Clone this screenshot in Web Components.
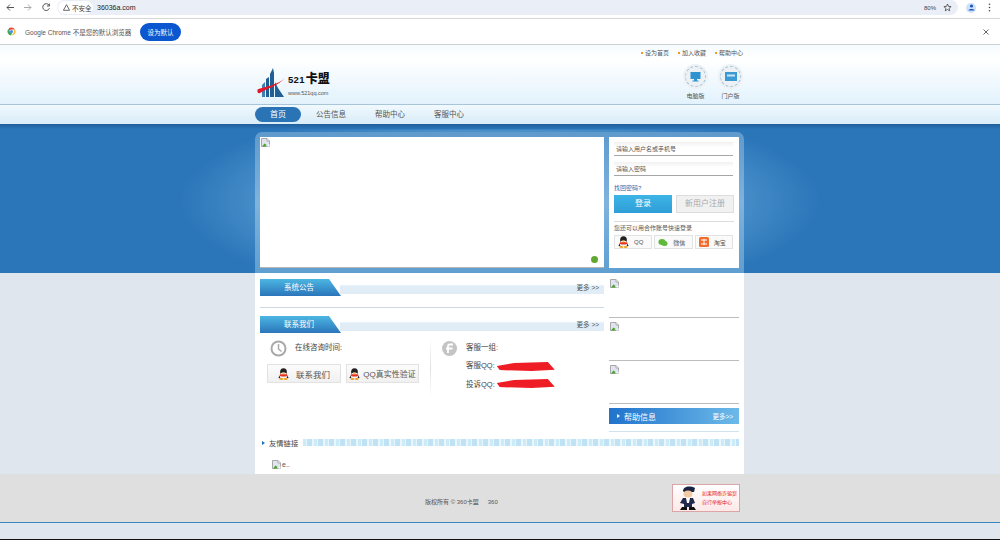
<!DOCTYPE html>
<html lang="zh">
<head>
<meta charset="utf-8">
<title>521卡盟</title>
<style>
    html, body { margin: 0; padding: 0; height: 540px; overflow: hidden; background: #dfe6ee; }
    body { box-sizing: border-box; border-bottom: 1px solid #111; font: 8px "Liberation Sans", "Noto Sans CJK SC", sans-serif; color: #444; display: flex; flex-direction: column; }
</style>
</head>
<body>
<browser-bar></browser-bar>
<info-bar></info-bar>
<site-header></site-header>
<site-nav></site-nav>
<hero-band></hero-band>
<main-panel></main-panel>
<site-footer></site-footer>

<script>
function html(strings, ...args) {
    let result = [strings[0]];
    for (let i = 0; i < args.length; i++) {
        result.push(args[i]);
        result.push(strings[i + 1]);
    }
    return result.join('');
}

function define(name, markup) {
    const template = document.createElement('template');
    template.innerHTML = markup;
    customElements.define(name, class extends HTMLElement {
        constructor() {
            super();
            this.attachShadow({mode: 'open'}).appendChild(template.content.cloneNode(true));
        }
    });
}

const penguin = html`<svg width="11" height="12" viewBox="0 0 11 12">
    <ellipse cx="5.5" cy="4" rx="3.4" ry="3.8" fill="#222"/>
    <ellipse cx="5.5" cy="7.6" rx="3.6" ry="3" fill="#f4f4f4"/>
    <path d="M2 6.2h7l.6 1.6-2 .6h-4l-2-.6z" fill="#e8341c"/>
    <path d="M1.6 7.5 .4 10l2 .2zM9.4 7.5l1.2 2.5-2 .2z" fill="#222"/>
    <ellipse cx="3.4" cy="11" rx="2" ry="1" fill="#f0a020"/>
    <ellipse cx="7.6" cy="11" rx="2" ry="1" fill="#f0a020"/>
    <ellipse cx="5.5" cy="5" rx="1.3" ry=".7" fill="#f0a020"/>
</svg>`;

define('broken-img', html`
    <style>:host { display: inline-block; width: 9px; height: 9px; line-height: 0; }</style>
    <svg width="9" height="9" viewBox="0 0 9 9">
        <path d="M.5.5h5.5l2.5 2.5v5.5h-8z" fill="#dfe4f0" stroke="#a8a8a8"/>
        <path d="M6 .5v2.5h2.5" fill="#fff" stroke="#a8a8a8"/>
        <path d="M1 8.5l2.500-3 2 1.500-1 1.500z" fill="#4aa52e"/>
        <path d="M6 8.500l2.500-2.500v2.500z" fill="#fff"/>
    </svg>
`);

define('browser-bar', html`
    <style>
        :host { display: flex; align-items: center; height: 18px; background: #fff; border-bottom: 1px solid #d6d6d6; padding-left: 5px; flex: none; }
        svg { display: block; flex: none; }
        .nav { display: flex; gap: 8px; margin-right: 6px; margin-top: -3px; }
        .omni { flex: none; width: 901px; height: 15px; margin-top: -3px; border-radius: 8px; background: #e9eef7; display: flex; align-items: center; box-sizing: border-box; padding: 0 1px; font-size: 7px; color: #222; }
        .chip { background: #fff; width: 35px; box-sizing: border-box; height: 13px; border-radius: 7px; display: flex; align-items: center; gap: 2px; padding-left: 5px; font-size: 6.500px; color: #444; margin-right: 4px; white-space: nowrap; }
        .url { flex: 1; }
        .end { display: flex; align-items: center; gap: 7px; margin-right: 5px; }
        .zoom { font-size: 6px; color: #444; }
        .acct { width: 10px; height: 10px; border-radius: 50%; background: #cfe0f8; margin-left: 8px; margin-top: -3px; display: flex; align-items: center; justify-content: center; }
        .dots { margin-left: 12px; margin-top: -3px; }
    </style>
    <div class="nav">
        <svg width="10" height="15" viewBox="0 0 10 15"><path d="M9 7.500H2M5 4.500l-3 3 3 3" fill="none" stroke="#555" stroke-width="1"/></svg>
        <svg width="10" height="15" viewBox="0 0 10 15"><path d="M1 7.500h7M5 4.500l3 3-3 3" fill="none" stroke="#aaa" stroke-width="1"/></svg>
        <svg width="10" height="15" viewBox="0 0 10 15"><path d="M8 5.200A3.400 3.400 0 1 0 8.400 8.200M8.400 3.600v2.400H6" fill="none" stroke="#555" stroke-width="1"/></svg>
    </div>
    <div class="omni">
        <span class="chip">
            <svg width="7" height="7" viewBox="0 0 7 7"><path d="M3.500.7 6.600 6.300H.4z" fill="none" stroke="#444" stroke-width=".8"/></svg>
            不安全
        </span>
        <span class="url">36036a.com</span>
        <span class="end">
            <span class="zoom">80%</span>
            <svg width="9" height="9" viewBox="0 0 9 9"><path d="M4.500 1l1 2.400 2.600.2-2 1.700.6 2.500-2.200-1.300-2.200 1.300.6-2.500-2-1.700 2.600-.2z" fill="none" stroke="#444" stroke-width=".8"/></svg>
        </span>
    </div>
    <span class="acct"><svg width="7" height="7" viewBox="0 0 7 7"><circle cx="3.500" cy="2" r="1.600" fill="#1a56b8"/><path d="M.5 6.500c0-2 6-2 6 0z" fill="#1a56b8"/></svg></span>
    <svg class="dots" width="3" height="9" viewBox="0 0 3 9"><circle cx="1.500" cy="1.200" r=".8" fill="#444"/><circle cx="1.500" cy="4.500" r=".8" fill="#444"/><circle cx="1.500" cy="7.800" r=".8" fill="#444"/></svg>
`);

define('info-bar', html`
    <style>
        :host { display: flex; align-items: center; height: 25px; flex: none; background: #fff; border-bottom: 1px solid #cfcfcf; padding: 0 11px 0 7px; font-size: 6.500px; color: #555; }
        svg { display: block; }
        .msg { margin-left: 9px; width: 106px; white-space: nowrap; }
        .btn { margin-left: 9px; width: 41px; height: 18px; border-radius: 9px; background: #0b57d0; color: #fff; font-size: 6.500px; display: flex; align-items: center; justify-content: center; }
        .x { margin-left: auto; }
    </style>
    <svg width="9" height="9" viewBox="0 0 18 18">
        <path d="M9 1a8 8 0 0 1 7 4H9a4 4 0 0 0-3.700 2.500L2.800 3.900A8 8 0 0 1 9 1z" fill="#e8453c"/>
        <path d="M16 5a8 8 0 0 1-6 12l3.300-5.500A4 4 0 0 0 13 6.500z" fill="#f9bb2d"/>
        <path d="M2.800 3.900 6 9.500a4 4 0 0 0 4 2.500l-1.800 5A8 8 0 0 1 2.800 3.900z" fill="#3aa757"/>
        <circle cx="9" cy="9" r="3" fill="#4285f4"/>
    </svg>
    <span class="msg">Google Chrome 不是您的默认浏览器</span>
    <span class="btn">设为默认</span>
    <svg class="x" width="6" height="6" viewBox="0 0 6 6"><path d="M.5.5l5 5M5.500.5l-5 5" stroke="#444" stroke-width=".8"/></svg>
`);

define('site-header', html`
    <style>
        :host { display: block; height: 60px; flex: none; box-sizing: border-box; border-bottom: 1px solid #a9c6d9; background: linear-gradient(#f5fbff, #fff 25%, #e2f2fc); }
        .wrap { width: 489px; margin-left: 255px; height: 100%; display: flex; justify-content: space-between; }
        .logo { display: flex; align-items: flex-start; padding: 23px 0 0 2px; }
        .logo svg { display: block; }
        .text { margin-left: 3px; }
        .name { margin-top: 2px; font: 900 12px/16px "Noto Sans CJK SC", sans-serif; color: #111; }
        .name small { font: bold 9.500px "Liberation Sans", sans-serif; letter-spacing: .3px; margin-right: 1px; }
        .site { font: 5.500px/7px "Liberation Sans", sans-serif; color: #555; margin-top: 4px; }
        .right { display: flex; flex-direction: column; align-items: flex-end; }
        .links { display: flex; gap: 9px; height: 14px; align-items: center; padding-right: 1px; color: #555; font-size: 6px; }
        .links span::before { content: ""; display: inline-block; width: 2px; height: 2px; background: #f39a1d; margin-right: 2px; vertical-align: middle; }
        .apps { display: flex; gap: 10px; margin-top: 5px; padding-right: 1px; }
        .app { width: 25px; text-align: center; font-size: 6px; color: #555; line-height: 9px; }
        .ring { width: 25px; height: 25px; border-radius: 50%; background: #eef1f3; display: flex; align-items: center; justify-content: center; position: relative; margin-bottom: 3px; }
        .ring::after { content: ""; position: absolute; inset: 2px; border-radius: 50%; border: 1px dashed #9cc3dd; }
    </style>
    <div class="wrap">
        <div class="logo">
            <svg width="28" height="30" viewBox="0 0 28 30">
                <path d="M9 29V11l3-2v20zM13 29V6l3-6 1 5v24zM18 29V14l3 6 6 9z" fill="#1f5f95"/>
                <path d="M5 29V17l3-3v15z" fill="#3c80b4"/>
                <path d="M.5 21.500C6 19 21 17 28 10 21 18 8 21.500 3 25 1 26 0 24 .5 21.500z" fill="#e3192b"/>
            </svg>
            <div class="text">
                <div class="name"><small>521</small>卡盟</div>
                <div class="site">www.521qq.com</div>
            </div>
        </div>
        <div class="right">
            <div class="links"><span>设为首页</span><span>加入收藏</span><span>帮助中心</span></div>
            <div class="apps">
                <div class="app">
                    <div class="ring"><svg width="11" height="10" viewBox="0 0 11 10"><path d="M.5 0h10v7h-10z" fill="#2e93cf"/><path d="M4 7h3v1.500h1.500v1h-6v-1H4z" fill="#2e93cf"/></svg></div>
                    电脑版
                </div>
                <div class="app">
                    <div class="ring"><svg width="12" height="9" viewBox="0 0 12 9"><path d="M0 0h12v9H0z" fill="#3a9ad4"/><path d="M2 2.500h8v2H2z" fill="#c8e4f4"/></svg></div>
                    门户版
                </div>
            </div>
        </div>
    </div>
`);

define('site-nav', html`
    <style>
        :host { display: block; height: 19px; flex: none; background: linear-gradient(#f1f9fe, #d8ecf8); }
        .wrap { width: 489px; margin-left: 255px; display: flex; padding-top: 2px; font-size: 7.500px; color: #555; }
        span { display: block; height: 15px; line-height: 15px; text-align: center; }
        .on { width: 46px; border-radius: 8px; background: #2a74b6; color: #fff; margin-right: 15px; font-size: 8px; }
        .item { width: 30px; margin-right: 29px; white-space: nowrap; }
    </style>
    <div class="wrap">
        <span class="on">首页</span>
        <span class="item">公告信息</span>
        <span class="item">帮助中心</span>
        <span class="item">客服中心</span>
    </div>
`);

define('login-box', html`
    <style>
        :host { display: block; width: 130px; background: #fff; box-sizing: border-box; padding: 5px 5px 0; font-size: 6px; color: #555; }
        .field { height: 14px; line-height: 13px; box-sizing: border-box; background: linear-gradient(#f1f1f1, #fff 40%); border-bottom: 1px solid #a5a5a5; padding: 1px 2px 0; margin-bottom: 6px; width: 119px; white-space: nowrap; }
        .forgot { color: #2b6cb0; height: 13px; line-height: 12px; }
        .btns { display: flex; gap: 4px; padding-bottom: 8px; border-bottom: 1px solid #ddd; width: 120px; }
        .btns span { width: 58px; height: 18px; line-height: 18px; text-align: center; box-sizing: border-box; font-size: 8px; }
        .primary { background: linear-gradient(#3db4e6, #2f9ed8); color: #fff; }
        .second { background: #f1f1f1; border: 1px solid #ddd; line-height: 16px !important; color: #aaa; }
        .hint { margin-top: 1px; height: 11px; line-height: 11px; white-space: nowrap; }
        .social { display: flex; gap: 2px; margin-top: 1px; width: 119px; }
        .social span { flex: 1; height: 14px; box-sizing: border-box; border: 1px solid #e2e2e2; display: flex; align-items: center; gap: 5px; padding-left: 3px; background: #fafafa; white-space: nowrap; }
        svg { display: block; flex: none; }
    </style>
    <div class="field">请输入用户名或手机号</div>
    <div class="field">请输入密码</div>
    <div class="forgot">找回密码?</div>
    <div class="btns"><span class="primary">登录</span><span class="second">新用户注册</span></div>
    <div class="hint">您还可以用合作账号快速登录</div>
    <div class="social">
        <span>${penguin}QQ</span>
        <span><svg width="10" height="9" viewBox="0 0 10 9"><ellipse cx="4" cy="4" rx="3.600" ry="3" fill="#61b83a"/><ellipse cx="6.500" cy="5.500" rx="3" ry="2.500" fill="#61b83a"/></svg>微信</span>
        <span><svg width="10" height="10" viewBox="0 0 10 10"><rect width="10" height="10" rx="1.500" fill="#f26a2c"/><path d="M2 3h6M5 2v6M2 7h6" stroke="#fff" stroke-width="1"/></svg>淘宝</span>
    </div>
`);

define('hero-band', html`
    <style>
        :host { display: block; height: 149px; flex: none; box-sizing: border-box; padding-top: 8px; background: linear-gradient(#1f5e9c, #2a75b8 5px, transparent 6px), radial-gradient(ellipse 320px 100px at 50% 52%, #4a90ca 72%, #2b76b9 100%); background-color: #2b76b9; }
        .panel { width: 489px; height: 141px; margin-left: 255px; box-sizing: border-box; padding: 5px 5px 0; border-radius: 7px 7px 0 0; background: linear-gradient(#5f9acc, #7eb3de 50%, #5f9fd0); display: flex; gap: 5px; }
        .slide { width: 344px; height: 131px; box-sizing: border-box; background: #fff; border-bottom: 1px solid #b5b5b5; position: relative; padding: 1px 0 0 1px; }
        .dot { position: absolute; right: 6px; bottom: 4px; width: 7px; height: 7px; border-radius: 50%; background: #62a82e; }
        login-box { height: 131px; }
    </style>
    <div class="panel">
        <div class="slide"><broken-img></broken-img><i class="dot"></i></div>
        <login-box></login-box>
    </div>
`);

define('section-head', html`
    <style>
        :host { display: block; height: 18px; position: relative; font-size: 7.500px; }
        .bar { position: absolute; left: 80px; right: 0; top: 1px; height: 14px; background: linear-gradient(#fff 30%, #e0edf7 45%); display: flex; justify-content: flex-end; align-items: center; color: #555; font-size: 6.500px; padding-right: 5px; }
        .tab { width: 81px; height: 17px; background: linear-gradient(#4cb6e2, #2b75ba); clip-path: polygon(0 0, 69px 0, 81px 100%, 0 100%); color: #fff; line-height: 17px; box-sizing: border-box; padding-left: 24px; position: relative; }
    </style>
    <div class="bar"><slot name="more"></slot></div>
    <div class="tab"><slot></slot></div>
`);

define('contact-card', html`
    <style>
        :host { display: grid; grid-template-columns: 171px 1fr; height: 55px; margin-top: 6px; font-size: 7.500px; color: #444; }
        svg { display: block; flex: none; }
        .left { padding-left: 10px; border-right: 1px solid transparent; border-image: linear-gradient(transparent, #e0e0e0 50%, transparent) 1; }
        .time { display: flex; align-items: flex-start; gap: 8px; height: 18px; line-height: 15px; }
        .btns { display: flex; gap: 5px; margin: 6px 0 0 -3px; }
        .btns span { height: 19px; box-sizing: border-box; border: 1px solid #e2e2e2; background: linear-gradient(#fcfcfc, #f0f0f0); display: flex; align-items: center; justify-content: center; gap: 3px; white-space: nowrap; color: #555; font-size: 8px; }
        .btns .a { width: 74px; gap: 7px; font-size: 8.500px; }
        .btns .b { width: 73px; }
        .right { display: flex; padding-left: 11px; gap: 9px; }
        .lines div { height: 19px; line-height: 15px; display: flex; align-items: flex-start; }
        .mask { display: inline-block; height: 9px; width: 58px; margin-left: 2px; background: #ee1c25; clip-path: polygon(0 45%, 30% 10%, 88% 0, 100% 85%, 60% 100%, 5% 90%); }
    </style>
    <div class="left">
        <div class="time">
            <svg width="17" height="17" viewBox="0 0 17 17"><circle cx="8.500" cy="8.500" r="7" fill="none" stroke="#a9a9a9" stroke-width="2"/><path d="M8.500 4v5l3 2.500" fill="none" stroke="#a9a9a9" stroke-width="1.500"/></svg>
            在线咨询时间:
        </div>
        <div class="btns">
            <span class="a">${penguin}联系我们</span>
            <span class="b">${penguin}QQ真实性验证</span>
        </div>
    </div>
    <div class="right">
        <svg width="15" height="17" viewBox="0 0 15 17"><circle cx="7.500" cy="8.500" r="7.500" fill="#c4c4c4"/><path d="M11 4.500H7.500A1.500 1.500 0 0 0 6 6v7M4 8.500h6.500" fill="none" stroke="#fff" stroke-width="1.800"/></svg>
        <div class="lines">
            <div style="height:18px">客服一组:</div>
            <div>客服QQ:<i class="mask" style="margin-top:4px"></i></div>
            <div>投诉QQ:<i class="mask" style="margin-top:2px"></i></div>
        </div>
    </div>
`);

define('side-slot', html`
    <style>
        :host { display: block; height: 39px; box-sizing: border-box; border-bottom: 1px solid #bdbdbd; padding-left: 1px; margin-bottom: 4px; }
    </style>
    <broken-img></broken-img>
`);

define('main-panel', html`
    <style>
        :host { display: block; width: 489px; height: 201px; flex: none; margin-left: 255px; background: #fff; box-sizing: border-box; padding: 6px 5px 0; font-size: 7.300px; }
        .cols { display: grid; grid-template-columns: 344px 130px; gap: 5px; height: 159px; }
        .rule { height: 1px; background: #cfd9e5; margin: 10px 0 8px; }
        .help { height: 24px; box-sizing: border-box; border-bottom: 1px solid #cfe2ee; }
        .helpbar { height: 16px; margin-top: 1px; background: linear-gradient(90deg, #2173cc, #6cbae9); color: #fff; display: flex; align-items: center; padding: 0 6px 0 8px; font-size: 8px; }
        .helpbar::before { content: ""; border-left: 3px solid #fff; border-top: 2px solid transparent; border-bottom: 2px solid transparent; margin-right: 4px; }
        .helpbar em { margin-left: auto; font-style: normal; font-size: 6.500px; }
        .friend { display: flex; align-items: center; height: 9px; padding-left: 2px; color: #444; }
        .friend::before { content: ""; border-left: 3px solid #1f6fb8; border-top: 2.500px solid transparent; border-bottom: 2.500px solid transparent; margin-right: 4px; }
        .friend i { flex: 1; height: 7px; margin-left: 5px; background: repeating-linear-gradient(90deg, #cdeaf7 0 3px, #e6f5fb 3px 4px, #bfe3f4 4px 9px, #eaf6fb 9px 11px); }
        .flink { display: flex; align-items: center; gap: 1px; margin: 11px 0 0 12px; font-size: 7px; color: #555; height: 12px; }
    </style>
    <div class="cols">
        <div>
            <section-head>系统公告<span slot="more">更多 &gt;&gt;</span></section-head>
            <div class="rule"></div>
            <section-head>联系我们<span slot="more">更多 &gt;&gt;</span></section-head>
            <contact-card></contact-card>
        </div>
        <div>
            <side-slot></side-slot>
            <side-slot></side-slot>
            <side-slot></side-slot>
            <div class="help"><div class="helpbar">帮助信息<em>更多&gt;&gt;</em></div></div>
        </div>
    </div>
    <div class="friend">友情链接<i></i></div>
    <div class="flink"><broken-img></broken-img>e..</div>
`);

define('site-footer', html`
    <style>
        :host { display: block; height: 48px; flex: none; background: #dfdfdf; border-bottom: 1px solid #3a87bd; }
        .wrap { width: 489px; margin-left: 255px; display: flex; justify-content: space-between; box-sizing: border-box; padding: 10px 4px 0 170px; }
        .copy { margin-top: 13px; height: 9px; font-size: 6px; color: #555; white-space: nowrap; display: flex; align-items: center; gap: 9px; }
        .cop { width: 68px; height: 28px; box-sizing: border-box; background: linear-gradient(#fff, #fde8e8); border: 1px solid #dca5a5; display: flex; align-items: center; gap: 3px; padding-left: 4px; color: #e31b23; font-size: 5px; line-height: 9px; white-space: nowrap; overflow: hidden; }
        svg { display: block; flex: none; }
    </style>
    <div class="wrap">
        <span class="copy"><span>版权所有 © 360卡盟</span><span>360</span></span>
        <div class="cop">
            <svg width="22" height="26" viewBox="0 0 22 26">
                <path d="M6 6C6 2 12 0 18 3l-1 4H7z" fill="#1c2340"/>
                <ellipse cx="11" cy="9" rx="4.500" ry="3.500" fill="#f2c9a5"/>
                <path d="M6 13h10l2 5-3 1v3H7v-3l-4-1z" fill="#20284c"/>
                <path d="M9 13h4l-1 5h-2z" fill="#fff"/>
                <path d="M5 22h5v3H3zM12 22h5l2 3h-7z" fill="#111"/>
            </svg>
            <div>如果网络诈骗案<br>自行举报中心</div>
        </div>
    </div>
`);
</script>
</body>
</html>
